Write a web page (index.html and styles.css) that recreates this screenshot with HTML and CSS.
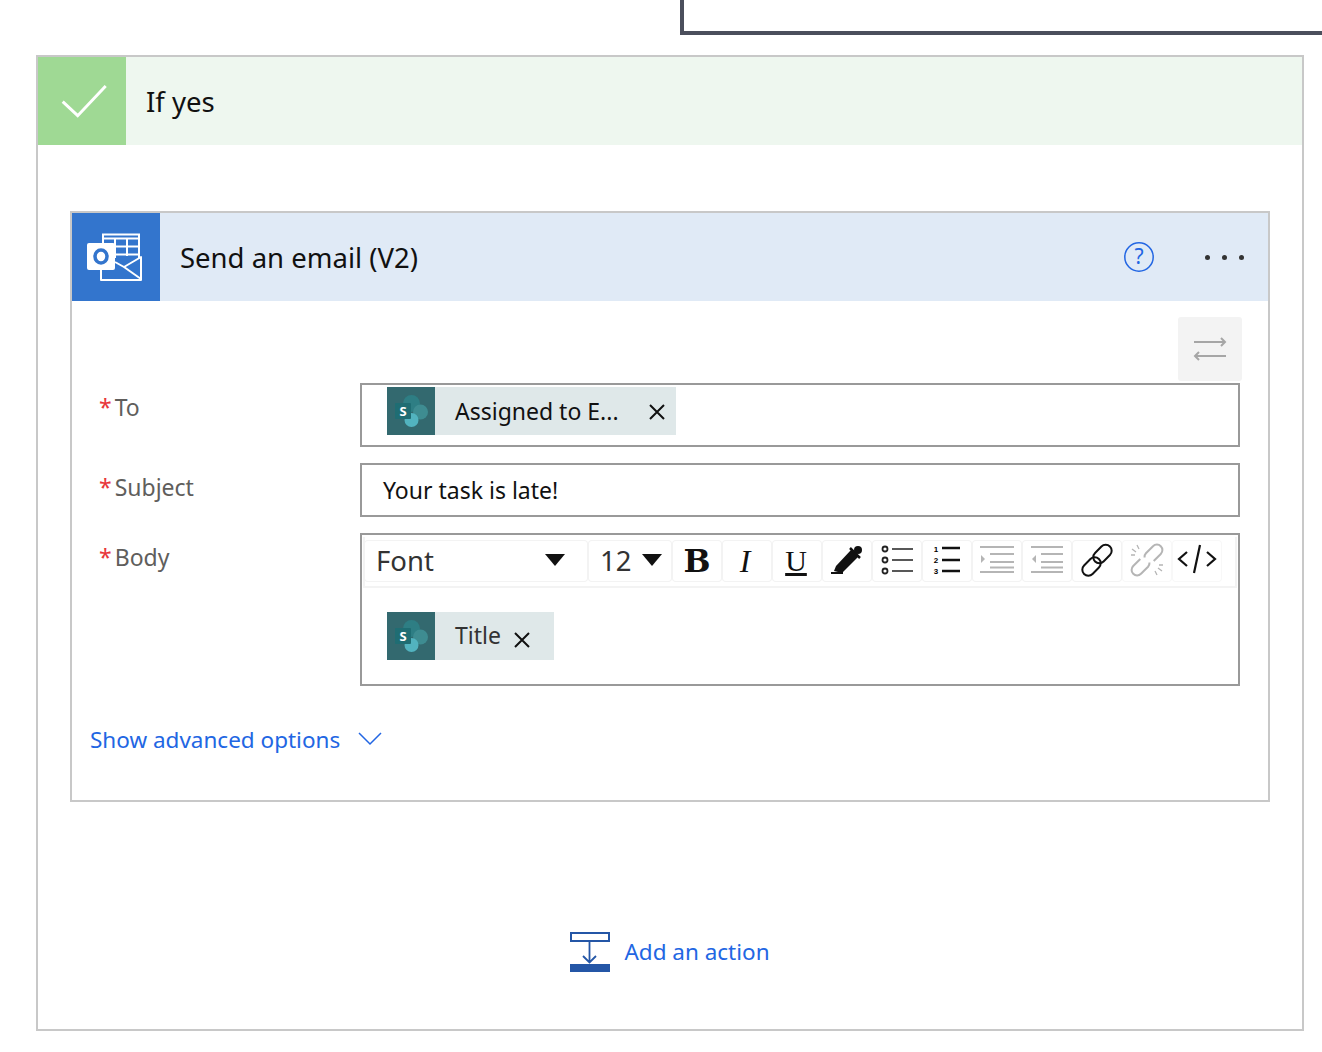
FILE: index.html
```html
<!DOCTYPE html>
<html lang="en">
<head>
    <meta charset="UTF-8">
    <title>If yes - Send an email</title>
    <link rel="stylesheet" href="styles.css">
</head>
<body>
    <div class="parent-box"></div>

    <section class="branch">
        <header class="branch-head">
            <div class="branch-icon">
                <svg width="88" height="88" viewBox="0 0 88 88"><polyline points="24.7,44.7 39.7,58.7 67.7,29" fill="none" stroke="#fff" stroke-width="3"/></svg>
            </div>
            <div class="branch-title">If yes</div>
        </header>

        <div class="branch-body">
            <section class="card">
                <header class="card-head">
                    <div class="card-icon">
                        <svg width="88" height="88" viewBox="0 0 88 88">
                            <path d="M31 33V21.500h36V45" fill="none" stroke="#fff" stroke-width="2"/>
                            <path d="M31 25.500h36M43 26v19M55 26v17M44 33.500h23M44 41.500h23" fill="none" stroke="#fff" stroke-width="2"/>
                            <path d="M29 57v10h40V44L52 54 43 49" fill="none" stroke="#fff" stroke-width="2" stroke-linejoin="round"/>
                            <path d="M52 54l17 12" fill="none" stroke="#fff" stroke-width="2"/>
                            <rect x="15" y="30" width="28" height="27" rx="2" fill="#fff"/>
                            <ellipse cx="29" cy="43.500" rx="6" ry="6.500" fill="none" stroke="#3375cd" stroke-width="3.500"/>
                        </svg>
                    </div>
                    <div class="card-title">Send an email (V2)</div>
                    <svg class="help-icon" width="32" height="32" viewBox="0 0 32 32">
                        <circle cx="16" cy="16" r="14.200" fill="none" stroke="#2266e3" stroke-width="1.500"/>
                        <text x="16" y="23" class="help-mark">?</text>
                    </svg>
                    <div class="more-dots"><span></span><span></span><span></span></div>
                </header>

                <div class="card-body">
                    <div class="swap-row">
                        <div class="swap-btn">
                            <svg width="64" height="64" viewBox="0 0 64 64">
                                <path d="M16 25h31M43 21l4 4-4 4M48 39H17M21 35l-4 4 4 4" fill="none" stroke="#a6a6a6" stroke-width="2"/>
                            </svg>
                        </div>
                    </div>

                    <div class="form-grid">
                        <label class="field-label"><span class="req">*</span>To</label>
                        <div class="field field-to">
                            <div class="chip">
                                <svg class="sp-icon" width="48" height="48" viewBox="0 0 48 48">
                                    <rect width="48" height="48" fill="#33696f"/>
                                    <circle cx="24.500" cy="16.500" r="8.500" fill="#2e7e84"/>
                                    <circle cx="33.500" cy="25" r="7.500" fill="#3e8c91"/>
                                    <circle cx="24.500" cy="33" r="7" fill="#52b3bf"/>
                                    <rect x="8" y="16" width="16" height="16" rx="1" fill="#1f6d73"/>
                                    <text x="16" y="29" class="sp-letter">S</text>
                                </svg>
                                <span class="chip-text">Assigned to E...</span>
                                <svg class="chip-close" width="20" height="20" viewBox="0 0 20 20"><path d="M3 3l14 14M17 3L3 17" stroke="#111" stroke-width="2"/></svg>
                            </div>
                        </div>

                        <label class="field-label"><span class="req">*</span>Subject</label>
                        <div class="field field-subject">Your task is late!</div>

                        <label class="field-label"><span class="req">*</span>Body</label>
                        <div class="field field-body">
                            <div class="toolbar">
                                <div class="tool tool-font"><span>Font</span><i class="caret"></i></div>
                                <div class="tool tool-size"><span>12</span><i class="caret"></i></div>
                                <div class="tool"><span class="glyph-b">B</span></div>
                                <div class="tool"><span class="glyph-i">I</span></div>
                                <div class="tool"><span class="glyph-u">U</span></div>
                                <div class="tool">
                                    <svg width="48" height="40" viewBox="0 0 48 40">
                                        <path d="M8 32h12" stroke="#111" stroke-width="2"/>
                                        <path d="M11 30l2 -5 15-16 7 7-16 16z" fill="#111"/>
                                        <path d="M27 7l10 10" stroke="#111" stroke-width="2.500"/>
                                        <circle cx="35" cy="9" r="4" fill="#111"/>
                                    </svg>
                                </div>
                                <div class="tool">
                                    <svg width="48" height="40" viewBox="0 0 48 40">
                                        <g fill="none" stroke="#222" stroke-width="1.800"><circle cx="12" cy="8" r="2.500"/><circle cx="12" cy="19" r="2.500"/><circle cx="12" cy="30" r="2.500"/></g>
                                        <path d="M19 8h21M19 19h21M19 30h21" stroke="#222" stroke-width="1.500"/>
                                    </svg>
                                </div>
                                <div class="tool">
                                    <svg width="48" height="40" viewBox="0 0 48 40">
                                        <text x="13" y="11" class="num-mark">1</text>
                                        <text x="13" y="22" class="num-mark">2</text>
                                        <text x="13" y="33" class="num-mark">3</text>
                                        <path d="M19 7h18M19 19h18M19 30h18" stroke="#111" stroke-width="2.500"/>
                                    </svg>
                                </div>
                                <div class="tool">
                                    <svg width="48" height="40" viewBox="0 0 48 40">
                                        <path d="M7 6h34M17 13h24M17 21h24M7 31h34M17 26.500h24" stroke="#b5b5b5" stroke-width="2" fill="none"/>
                                        <path d="M8 14l4 4-4 4z" fill="#b5b5b5"/>
                                    </svg>
                                </div>
                                <div class="tool">
                                    <svg width="48" height="40" viewBox="0 0 48 40">
                                        <path d="M8 6h32M18 13h22M18 21h22M8 31h32M18 26.500h22" stroke="#b5b5b5" stroke-width="2" fill="none"/>
                                        <path d="M13 14l-4 4 4 4z" fill="#b5b5b5"/>
                                    </svg>
                                </div>
                                <div class="tool">
                                    <svg width="48" height="40" viewBox="0 0 48 40">
                                        <g fill="none" stroke="#111" stroke-width="2">
                                            <rect x="8" y="19.500" width="21" height="12" rx="6" transform="rotate(-45 18.500 25.500)"/>
                                            <rect x="19" y="7" width="21" height="12" rx="6" transform="rotate(-45 29.500 13)"/>
                                        </g>
                                    </svg>
                                </div>
                                <div class="tool tool-off">
                                    <svg width="48" height="40" viewBox="0 0 48 40">
                                        <g fill="none" stroke="#b5b5b5" stroke-width="2" transform="rotate(-45 24 19)">
                                            <path d="M20 13.500H10a5.500 5.500 0 0 0 0 11h10a5.500 5.500 0 0 0 4-2"/>
                                            <path d="M28 24.500h10a5.500 5.500 0 0 0 0-11H28a5.500 5.500 0 0 0-4 2"/>
                                        </g>
                                        <path d="M14 4l2 4M9 8l4 3M8 14l4 0M34 34l-2-4M39 30l-4-3M40 24l-4 0" stroke="#b5b5b5" stroke-width="1.300"/>
                                    </svg>
                                </div>
                                <div class="tool tool-bare">
                                    <svg width="48" height="40" viewBox="0 0 48 40">
                                        <path d="M14 11l-8 7 8 7M34 11l8 7-8 7" fill="none" stroke="#111" stroke-width="2.200"/>
                                        <path d="M27 4l-6 28" stroke="#111" stroke-width="2.200"/>
                                    </svg>
                                </div>
                            </div>
                            <div class="chip chip-title">
                                <svg class="sp-icon" width="48" height="48" viewBox="0 0 48 48">
                                    <rect width="48" height="48" fill="#33696f"/>
                                    <circle cx="24.500" cy="16.500" r="8.500" fill="#2e7e84"/>
                                    <circle cx="33.500" cy="25" r="7.500" fill="#3e8c91"/>
                                    <circle cx="24.500" cy="33" r="7" fill="#52b3bf"/>
                                    <rect x="8" y="16" width="16" height="16" rx="1" fill="#1f6d73"/>
                                    <text x="16" y="29" class="sp-letter">S</text>
                                </svg>
                                <span class="chip-text chip-text-grey">Title</span>
                                <svg class="chip-close chip-close-title" width="20" height="20" viewBox="0 0 20 20"><path d="M3 3l14 14M17 3L3 17" stroke="#111" stroke-width="2"/></svg>
                            </div>
                        </div>
                    </div>

                    <div class="advanced">
                        <a class="link">Show advanced options</a>
                        <svg width="26" height="16" viewBox="0 0 26 16"><polyline points="2,2 13,13 24,2" fill="none" stroke="#2266e3" stroke-width="1.500"/></svg>
                    </div>
                </div>
            </section>

            <div class="add-action">
                <svg width="40" height="40" viewBox="0 0 40 40">
                    <rect x="1" y="1" width="38" height="8" fill="#fff" stroke="#2456a6" stroke-width="2"/>
                    <path d="M19.500 10v20M13 24l6.500 6.500L26 24" fill="none" stroke="#2456a6" stroke-width="1.800"/>
                    <rect x="0" y="32" width="40" height="8" fill="#2456a6"/>
                </svg>
                <a class="link link-action">Add an action</a>
            </div>
        </div>
    </section>
</body>
</html>
```

FILE: styles.css
```css
* {
    box-sizing: border-box;
}
body {
    margin: 0;
    background: #fff;
    font-family: "Noto Sans", "Open Sans", sans-serif;
    color: #111;
}
svg {
    display: block;
    flex: none;
}

.parent-box {
    height: 35px;
    margin-left: 680px;
    border-left: 4px solid #4b4f5c;
    border-bottom: 4px solid #4b4f5c;
}

.branch {
    width: 1268px;
    margin: 20px 0 0 36px;
    border: 2px solid #c8c8c8;
}
.branch-head {
    display: flex;
    align-items: center;
    height: 88px;
    background: #eef7ef;
}
.branch-icon {
    width: 88px;
    height: 88px;
    background: #9fd994;
}
.branch-title {
    margin-left: 20px;
    font-size: 27.500px;
}
.branch-body {
    padding: 66px 32px 57px;
}

.card {
    border: 2px solid #c8c8c8;
}
.card-head {
    display: flex;
    align-items: center;
    height: 88px;
    background: #e0eaf6;
}
.card-icon {
    width: 88px;
    height: 88px;
    background: #3375cd;
}
.card-title {
    flex: 1;
    margin-left: 20px;
    font-size: 27.500px;
}
.help-mark {
    font-size: 21px;
    text-anchor: middle;
    fill: #2266e3;
}
.more-dots {
    display: flex;
    gap: 12px;
    margin: 0 24px 0 50px;
}
.more-dots span {
    width: 5px;
    height: 5px;
    border-radius: 50%;
    background: #333;
}

.card-body {
    padding: 16px 28px 45px 18px;
}
.swap-row {
    display: flex;
    justify-content: flex-end;
    margin: 0 -2px 2px 0;
}
.swap-btn {
    width: 64px;
    height: 64px;
    background: #f3f3f3;
    border-radius: 3px;
}

.form-grid {
    display: grid;
    grid-template-columns: 270px 880px;
    row-gap: 16px;
}
.field-label {
    padding: 8px 0 0 9px;
    font-size: 23px;
    color: #605e5c;
}
.req {
    margin-right: 3px;
    color: #e8373a;
}
.field {
    border: 2px solid #999;
}
.field-to {
    height: 64px;
    padding: 2px 0 0 25px;
}
.field-subject {
    height: 54px;
    padding: 9px 0 0 21px;
    font-size: 23px;
}
.field-body {
    height: 153px;
}

.chip {
    display: inline-flex;
    align-items: center;
    height: 48px;
    background: #dfe8e9;
}
.chip-text {
    margin-left: 20px;
    font-size: 23px;
    white-space: nowrap;
}
.chip-text-grey {
    margin-bottom: 2px;
    color: #333;
}
.chip-close {
    margin: 2px 9px 0 28px;
}
.chip-close-title {
    margin: 8px 22px 0 11px;
}
.chip-title {
    margin: 24px 0 0 25px;
}

.toolbar {
    display: flex;
    gap: 2px;
    height: 51px;
    margin: 2px 1px 0;
    padding: 4px 0 0;
    border: 2px solid #f3f3f3;
    border-width: 0 2px 2px;
}
.tool {
    display: flex;
    align-items: center;
    justify-content: center;
    width: 48px;
    height: 40px;
    border-radius: 3px;
    box-shadow: 0 0 0 1px #f3f3f3;
}
.tool-off,
.tool-bare {
    box-shadow: 0 0 0 1px #f8f8f8;
}
.tool-font {
    justify-content: space-between;
    width: 222px;
    padding: 0 22px 2px 11px;
    font-size: 27.500px;
    color: #333;
}
.tool-size {
    justify-content: space-between;
    width: 82px;
    padding: 0 9px 2px 11px;
    font-size: 27.500px;
    color: #333;
}
.caret {
    width: 0;
    height: 0;
    border-left: 10px solid transparent;
    border-right: 10px solid transparent;
    border-top: 12px solid #111;
}
.glyph-b {
    font-family: "DejaVu Serif", serif;
    font-size: 32px;
    font-weight: bold;
    color: #111;
}
.glyph-i {
    margin-right: 4px;
    font-family: "Liberation Serif", serif;
    font-size: 32px;
    font-style: italic;
    color: #111;
}
.glyph-u {
    margin-right: 2px;
    font-family: "Liberation Serif", serif;
    font-size: 30px;
    text-decoration: underline;
    color: #111;
}
.num-mark {
    font-family: "Liberation Sans", sans-serif;
    font-size: 8px;
    font-weight: bold;
    text-anchor: middle;
}
.sp-letter {
    font-family: "Noto Sans", sans-serif;
    font-size: 13px;
    font-weight: bold;
    text-anchor: middle;
    fill: #fff;
}

.link {
    font-size: 22.500px;
    color: #2266e3;
}
.link-action {
    margin-bottom: 1px;
}
.advanced {
    display: flex;
    align-items: center;
    gap: 17px;
    height: 32px;
    margin-top: 37px;
}
.add-action {
    display: flex;
    align-items: center;
    justify-content: center;
    gap: 14px;
    margin-top: 130px;
}
```
